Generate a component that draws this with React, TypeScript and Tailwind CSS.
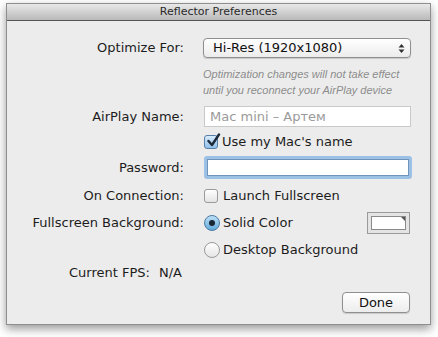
import React from "react";

const font = { fontFamily: '"DejaVu Sans", "Noto Sans", sans-serif' };

// small aqua-ish widgets
const CheckBox: React.FC<{ checked?: boolean }> = ({ checked }) => (
   <span
      className={
         "relative inline-block w-[14px] h-[14px] rounded-[3px] border shrink-0 " +
         (checked
            ? "border-[#5a7fa6] bg-gradient-to-b from-[#d9ecfb] to-[#8fc0ea]"
            : "border-[#9a9a9a] bg-gradient-to-b from-[#ffffff] to-[#e4e4e4]")
      }
   >
      {checked && (
         <svg
            className="absolute left-[1px] -top-[3px]"
            width="15"
            height="15"
            viewBox="0 0 15 15"
         >
            <path
               d="M2.5 8 L6 12 L13 1.5"
               fill="none"
               stroke="#1d2a3a"
               strokeWidth="2.4"
               strokeLinecap="round"
               strokeLinejoin="round"
            />
         </svg>
      )}
   </span>
);

const Radio: React.FC<{ on?: boolean }> = ({ on }) => (
   <span
      className={
         "relative inline-flex items-center justify-center w-[16px] h-[16px] rounded-full border shrink-0 " +
         (on
            ? "border-[#4c7aa0] bg-gradient-to-b from-[#bfe1f7] to-[#5fa9dc]"
            : "border-[#9a9a9a] bg-gradient-to-b from-[#ffffff] to-[#e6e6e6]")
      }
   >
      {on && <span className="w-[6px] h-[6px] rounded-full bg-[#1a2633]" />}
   </span>
);

const Label: React.FC<{ children: React.ReactNode }> = ({ children }) => (
   <div className="w-[177px] shrink-0 text-right text-[13px] text-[#1c1c1c]">
      {children}
   </div>
);

const App: React.FC = () => {
   return (
      <div className="w-[438px] h-[337px] bg-white pt-[3px] pl-[6px]" style={font}>
         <div className="w-[425px] h-[322px] flex flex-col border border-[#8e8e8e] bg-[#ececec] shadow-[0_4px_9px_rgba(0,0,0,0.4)]">
            {/* title bar */}
            <div className="h-[17px] shrink-0 flex items-center justify-center border-b border-[#555] bg-gradient-to-b from-[#e9e9e9] to-[#b9b9b9] text-[11px] text-[#2a2a2a]">
               Reflector Preferences
            </div>

            <div className="flex flex-col">
               {/* optimize for */}
               <div className="flex items-center mt-[17px] h-[20px]">
                  <Label>Optimize For:</Label>
                  <div className="ml-[19px] w-[208px] h-[20px] flex items-center justify-between pl-[9px] pr-[5px] rounded-[4px] border border-[#8f8f8f] bg-gradient-to-b from-[#ffffff] to-[#ececec] shadow-[0_1px_1px_rgba(0,0,0,0.15)] text-[13px] text-[#111]">
                     <span>Hi-Res (1920x1080)</span>
                     <svg width="7" height="11" viewBox="0 0 7 11">
                        <path d="M0.5 4.5 L3.5 1 L6.5 4.5 Z" fill="#333" />
                        <path d="M0.5 6.5 L3.5 10 L6.5 6.5 Z" fill="#333" />
                     </svg>
                  </div>
               </div>

               {/* hint */}
               <div
                  className="ml-[196px] mt-[8px] text-[11px] italic leading-[16px] text-[#8d8d8d]"
                  style={{ fontFamily: '"Liberation Sans", Arial, sans-serif' }}
               >
                  <div>Optimization changes will not take effect</div>
                  <div>until you reconnect your AirPlay device</div>
               </div>

               {/* airplay name */}
               <div className="flex items-center mt-[8px] h-[21px]">
                  <Label>AirPlay Name:</Label>
                  <div className="ml-[20px] w-[207px] h-[21px] flex items-center pl-[5px] border border-[#c9c9c9] bg-white text-[13px] text-[#9a9a9a]">
                     Mac mini – Артем
                  </div>
               </div>

               {/* use mac name */}
               <div className="flex items-center gap-[4px] ml-[197px] mt-[6px] h-[18px] text-[13px] text-[#1c1c1c]">
                  <CheckBox checked />
                  <span>Use my Mac's name</span>
               </div>

               {/* password */}
               <div className="flex items-center mt-[5px] h-[23px]">
                  <Label>Password:</Label>
                  <div className="ml-[20px] w-[208px] h-[23px] rounded-[3px] border-[3px] border-[#9cc1e4] bg-white">
                     <div className="w-full h-full border border-[#6f95bd]" />
                  </div>
               </div>

               {/* on connection */}
               <div className="flex items-center mt-[8px] h-[18px]">
                  <Label>On Connection:</Label>
                  <div className="ml-[20px] flex items-center gap-[5px] text-[13px] text-[#1c1c1c]">
                     <CheckBox />
                     <span>Launch Fullscreen</span>
                  </div>
               </div>

               {/* fullscreen background */}
               <div className="flex items-center mt-[7px] h-[22px]">
                  <Label>Fullscreen Background:</Label>
                  <div className="ml-[20px] flex items-center gap-[3px] text-[13px] text-[#1c1c1c]">
                     <Radio on />
                     <span>Solid Color</span>
                  </div>
                  <div className="ml-auto mr-[20px] w-[43px] h-[22px] p-[3px] border border-[#9a9a9a] bg-[#e4e4e4]">
                     <div className="relative w-full h-full border border-[#8a8a8a] bg-white">
                        <svg className="absolute right-0 top-0" width="4" height="4" viewBox="0 0 4 4">
                           <path d="M0 0 L4 0 L4 4 Z" fill="#555" />
                        </svg>
                     </div>
                  </div>
               </div>

               {/* desktop background */}
               <div className="flex items-center gap-[3px] ml-[197px] mt-[7px] h-[18px] text-[13px] text-[#1c1c1c]">
                  <Radio />
                  <span>Desktop Background</span>
               </div>

               {/* current fps */}
               <div className="flex items-center mt-[6px] h-[16px] ml-[62px] text-[13px] text-[#1c1c1c]">
                  <span className="w-[90px]">Current FPS:</span>
                  <span>N/A</span>
               </div>

               {/* done */}
               <div className="flex justify-end mt-[11px] pr-[20px]">
                  <button className="w-[68px] h-[21px] rounded-[4px] border border-[#8f8f8f] bg-gradient-to-b from-[#ffffff] to-[#ececec] shadow-[0_1px_1px_rgba(0,0,0,0.15)] text-[13px] text-[#111] leading-none">
                     Done
                  </button>
               </div>
            </div>
         </div>
      </div>
   );
};

export default App;
